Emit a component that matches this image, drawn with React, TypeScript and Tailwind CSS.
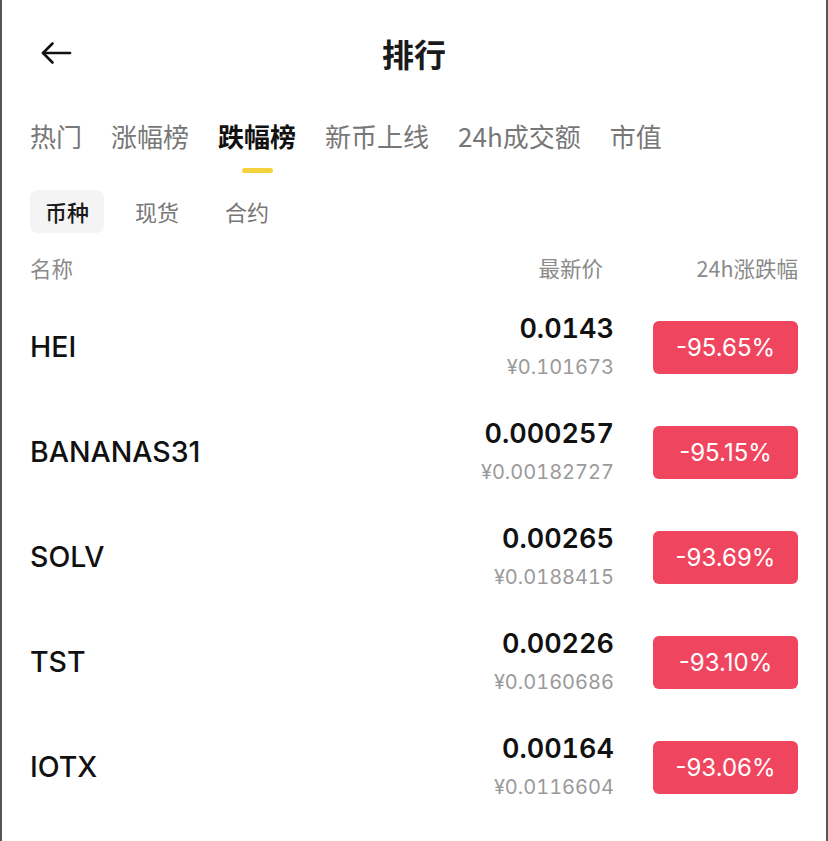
const TABS = ['热门', '涨幅榜', '跌幅榜', '新币上线', '24h成交额', '市值']
const SUB_TABS = ['币种', '现货', '合约']

const ROWS = [
  { symbol: 'HEI', price: '0.0143', cny: '¥0.101673', change: '-95.65%' },
  { symbol: 'BANANAS31', price: '0.000257', cny: '¥0.00182727', change: '-95.15%' },
  { symbol: 'SOLV', price: '0.00265', cny: '¥0.0188415', change: '-93.69%' },
  { symbol: 'TST', price: '0.00226', cny: '¥0.0160686', change: '-93.10%' },
  { symbol: 'IOTX', price: '0.00164', cny: '¥0.0116604', change: '-93.06%' },
]

const cjk = "font-['Noto_Sans_CJK_SC','Noto_Sans',sans-serif]"
const num = "font-['Inter','Noto_Sans_CJK_SC',sans-serif]"

function BackArrow() {
  return (
    <svg width="32" height="24" viewBox="0 0 32 24" fill="none" stroke="#111" strokeWidth="2.6" strokeLinecap="round" strokeLinejoin="round">
      <path d="M3 12h27" />
      <path d="M12.5 2.5L3 12l9.5 9.5" />
    </svg>
  )
}

export default function App() {
  const activeTab = 2
  const activeSub = 0

  return (
    <div className={`min-h-[841px] w-[828px] overflow-hidden bg-white border-l-2 border-r-2 border-[#555] ${cjk}`}>
      {/* Top bar */}
      <div className="relative h-[106px] flex items-center justify-center">
        <div className="absolute left-[38px] top-[41px]">
          <BackArrow />
        </div>
        <h1 className="text-[32px] font-bold text-[#1a1a1a] leading-none">排行</h1>
      </div>

      {/* Tabs */}
      <div className="flex gap-[29px] pl-[28px] pt-[15px]">
        {TABS.map((t, i) => (
          <div key={t} className="flex flex-col items-center">
            <span
              className={`text-[26px] leading-[30px] whitespace-nowrap ${
                i === activeTab ? 'font-bold text-[#111]' : 'text-[#777]'
              }`}
            >
              {t}
            </span>
            <div
              className={`mt-[17px] h-[5px] w-[31px] rounded-full ${i === activeTab ? 'bg-[#f5d23c]' : 'bg-transparent'}`}
            />
          </div>
        ))}
      </div>

      {/* Sub tabs */}
      <div className="flex items-center pl-[28px] mt-[17px] gap-[16px]">
        {SUB_TABS.map((t, i) => (
          <div
            key={t}
            className={`h-[43px] px-[15px] flex items-center rounded-[8px] text-[22px] ${
              i === activeSub ? 'bg-[#f4f4f4] text-[#1a1a1a] font-medium' : 'text-[#777]'
            }`}
          >
            {t}
          </div>
        ))}
      </div>

      {/* Column header */}
      <div className="flex items-center pl-[28px] pr-[28px] mt-[23px] h-[24px] text-[21.5px] text-[#8a8a8a]">
        <span className="flex-1">名称</span>
        <span className="mr-[50px]">最新价</span>
        <span className="w-[145px] text-right">24h涨跌幅</span>
      </div>

      {/* Rows */}
      <div className="mt-[15px] pl-[28px] pr-[28px]">
        {ROWS.map(r => (
          <div key={r.symbol} className="h-[105px] flex items-center">
            <span className={`flex-1 text-[28.5px] font-medium text-[#111] ${num}`}>{r.symbol}</span>
            <div className={`flex flex-col items-end mr-[39px] tabular-nums ${num}`}>
              <span className="text-[27px] leading-[36px] font-semibold text-[#111]">{r.price}</span>
              <span className="mt-[2px] text-[20px] leading-[36px] text-[#9a9a9a]">{r.cny}</span>
            </div>
            <div className={`w-[145px] h-[53px] rounded-[6px] bg-[#f0455e] flex items-center justify-center text-white text-[24px] ${num}`}>
              {r.change}
            </div>
          </div>
        ))}
      </div>
    </div>
  )
}
